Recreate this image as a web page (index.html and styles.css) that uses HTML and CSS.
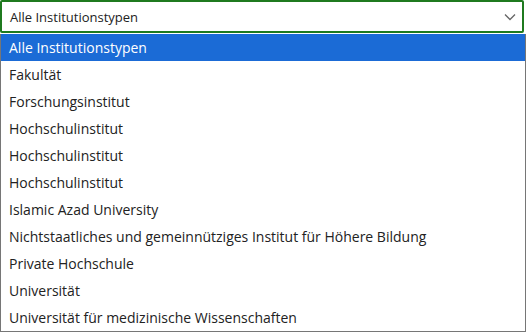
FILE: index.html
```html
<!DOCTYPE html>
<html lang="de">
<head>
  <meta charset="UTF-8">
  <title>Institutionstyp</title>
  <link rel="stylesheet" href="styles.css">
</head>
<body>
  <div class="select-wrap">
    <div class="select-box">
      <span>Alle Institutionstypen</span>
      <svg class="chevron" width="12" height="8" viewBox="0 0 12 8">
        <path d="M1 1.5 L6 6.5 L11 1.5" fill="none" stroke="#666" stroke-width="1.3"/>
      </svg>
    </div>
    <ul class="options">
      <li class="selected">Alle Institutionstypen</li>
      <li>Fakultät</li>
      <li>Forschungsinstitut</li>
      <li>Hochschulinstitut</li>
      <li>Hochschulinstitut</li>
      <li>Hochschulinstitut</li>
      <li>Islamic Azad University</li>
      <li>Nichtstaatliches und gemeinnütziges Institut für Höhere Bildung</li>
      <li>Private Hochschule</li>
      <li>Universität</li>
      <li>Universität für medizinische Wissenschaften</li>
    </ul>
  </div>
</body>
</html>
```

FILE: styles.css
```css
body {
  margin: 0;
  font-family: "Open Sans", Arial, sans-serif;
  background: #fff;
  color: #222;
}
.select-wrap {
  width: 526px;
}
.select-box {
  width: 524px;
  height: 33px;
  box-sizing: border-box;
  border: 2px solid #1f7a1f;
  border-radius: 2px;
  display: flex;
  align-items: center;
  justify-content: space-between;
  padding: 0 6px 0 8px;
  font-size: 13px;
}
.options {
  list-style: none;
  margin: 1px 0 0;
  padding: 0;
  border: 1px solid #767676;
  border-top: none;
}
.options li {
  height: 27px;
  line-height: 27px;
  padding-left: 8px;
  font-size: 14px;
  white-space: nowrap;
}
.options li.selected {
  background: #1b6bd6;
  color: #fff;
}
```
